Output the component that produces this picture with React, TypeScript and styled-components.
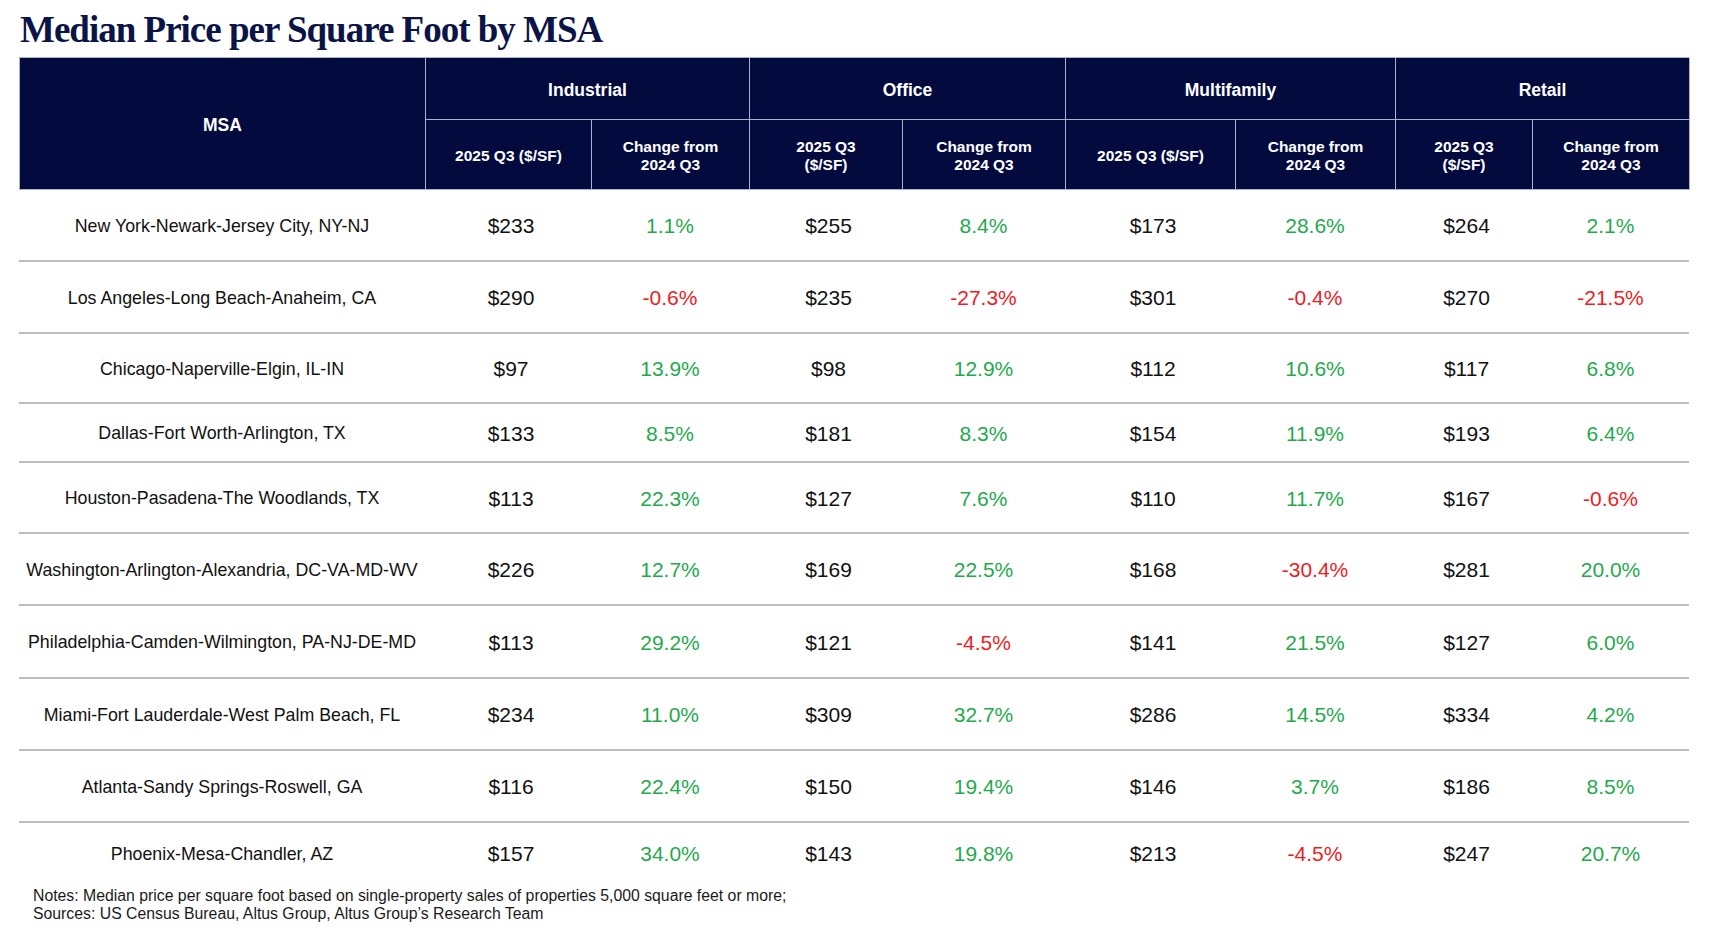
import React from "react";
import styled, { createGlobalStyle } from "styled-components";

const navy = "#020a3e";
const gridLine = "#a9b2ca";
const green = "#1faa4d";
const red = "#ee1c24";
const columns = "406px 166px 158px 153px 163px 170px 160px 137px 157px";

type Row = { msa: string; values: string[]; height: number };

const rows: Row[] = [
    { msa: "New York-Newark-Jersey City, NY-NJ", values: ["$233", "1.1%", "$255", "8.4%", "$173", "28.6%", "$264", "2.1%"], height: 72 },
    { msa: "Los Angeles-Long Beach-Anaheim, CA", values: ["$290", "-0.6%", "$235", "-27.3%", "$301", "-0.4%", "$270", "-21.5%"], height: 72 },
    { msa: "Chicago-Naperville-Elgin, IL-IN", values: ["$97", "13.9%", "$98", "12.9%", "$112", "10.6%", "$117", "6.8%"], height: 70 },
    { msa: "Dallas-Fort Worth-Arlington, TX", values: ["$133", "8.5%", "$181", "8.3%", "$154", "11.9%", "$193", "6.4%"], height: 59 },
    { msa: "Houston-Pasadena-The Woodlands, TX", values: ["$113", "22.3%", "$127", "7.6%", "$110", "11.7%", "$167", "-0.6%"], height: 71 },
    { msa: "Washington-Arlington-Alexandria, DC-VA-MD-WV", values: ["$226", "12.7%", "$169", "22.5%", "$168", "-30.4%", "$281", "20.0%"], height: 72 },
    { msa: "Philadelphia-Camden-Wilmington, PA-NJ-DE-MD", values: ["$113", "29.2%", "$121", "-4.5%", "$141", "21.5%", "$127", "6.0%"], height: 73 },
    { msa: "Miami-Fort Lauderdale-West Palm Beach, FL", values: ["$234", "11.0%", "$309", "32.7%", "$286", "14.5%", "$334", "4.2%"], height: 72 },
    { msa: "Atlanta-Sandy Springs-Roswell, GA", values: ["$116", "22.4%", "$150", "19.4%", "$146", "3.7%", "$186", "8.5%"], height: 72 },
    { msa: "Phoenix-Mesa-Chandler, AZ", values: ["$157", "34.0%", "$143", "19.8%", "$213", "-4.5%", "$247", "20.7%"], height: 60 },
];

const groups = [
    { name: "Industrial", price: "2025 Q3 ($/SF)" },
    { name: "Office", price: "2025 Q3\n($/SF)" },
    { name: "Multifamily", price: "2025 Q3 ($/SF)" },
    { name: "Retail", price: "2025 Q3\n($/SF)" },
];

type Tone = "plain" | "up" | "down";

const toneOf = (value: string): Tone => {
    if (value.startsWith("$")) return "plain";
    return value.startsWith("-") ? "down" : "up";
};

export default function App() {
    return (
        <Page>
            <GlobalStyle />
            <Title>Median Price per Square Foot by MSA</Title>
            <Table>
                <HeaderGrid>
                    <HeaderCell $rowSpan={2} $big>MSA</HeaderCell>
                    { groups.map((g) => (
                        <HeaderCell key={ g.name } $colSpan={2} $big>{ g.name }</HeaderCell>
                    )) }
                    { groups.map((g) => (
                        <React.Fragment key={ g.name + "-sub" }>
                            <HeaderCell>{ g.price }</HeaderCell>
                            <HeaderCell>{ "Change from\n2024 Q3" }</HeaderCell>
                        </React.Fragment>
                    )) }
                </HeaderGrid>
                { rows.map((row, i) => (
                    <BodyRow key={ row.msa } $height={ row.height } $last={ i === rows.length - 1 }>
                        <MsaCell>{ row.msa }</MsaCell>
                        { row.values.map((v, j) => (
                            <ValueCell key={ j } $tone={ toneOf(v) }>{ v }</ValueCell>
                        )) }
                    </BodyRow>
                )) }
            </Table>
            <Notes>
                Notes: Median price per square foot based on single-property sales of properties 5,000 square feet or more;<br />
                Sources: US Census Bureau, Altus Group, Altus Group’s Research Team
            </Notes>
        </Page>
    );
}

const GlobalStyle = createGlobalStyle`
    html, body {
        margin: 0;
        padding: 0;
        background: #ffffff;
    }
    * {
        box-sizing: border-box;
    }
`;

const Page = styled.div`
    width: 1720px;
    height: 938px;
    padding: 11px 0 0 19px;
    font-family: "Liberation Sans", Arial, sans-serif;
    overflow: hidden;
`;

const Title = styled.h1`
    margin: 0 0 9px 1px;
    font-family: "Liberation Serif", "Times New Roman", serif;
    font-size: 37px;
    line-height: 37px;
    font-weight: 700;
    letter-spacing: -1px;
    color: #0a1446;
`;

const Table = styled.div`
    width: 1670px;
`;

const HeaderGrid = styled.div`
    display: grid;
    grid-template-columns: ${columns};
    grid-template-rows: 62px 70px;
    background: ${navy};
    border-top: 1px solid ${gridLine};
    border-left: 1px solid ${gridLine};
`;

const HeaderCell = styled.div<{ $rowSpan?: number; $colSpan?: number; $big?: boolean }>`
    grid-row: span ${(p) => p.$rowSpan ?? 1};
    grid-column: span ${(p) => p.$colSpan ?? 1};
    display: flex;
    align-items: center;
    justify-content: center;
    text-align: center;
    white-space: pre-line;
    border-right: 1px solid ${gridLine};
    border-bottom: 1px solid ${gridLine};
    color: #ffffff;
    font-size: ${(p) => (p.$big ? "17.5px" : "15.5px")};
    line-height: 18px;
    font-weight: 700;
    padding-top: 2px;
`;

const BodyRow = styled.div<{ $height: number; $last: boolean }>`
    display: grid;
    grid-template-columns: ${columns};
    height: ${(p) => p.$height}px;
    padding-top: 2px;
    border-bottom: ${(p) => (p.$last ? "none" : "2px solid #bdbdbd")};
`;

const MsaCell = styled.div`
    display: flex;
    align-items: center;
    justify-content: center;
    font-size: 17.8px;
    color: #111111;
    white-space: nowrap;
`;

const ValueCell = styled.div<{ $tone: Tone }>`
    display: flex;
    align-items: center;
    justify-content: center;
    padding-left: ${(p) => (p.$tone === "plain" ? "6px" : "0")};
    font-size: 21px;
    color: ${(p) => (p.$tone === "up" ? green : p.$tone === "down" ? red : "#111111")};
`;

const Notes = styled.div`
    margin: 4px 0 0 14px;
    font-size: 15.8px;
    line-height: 18px;
    color: #1a1a1a;
`;
